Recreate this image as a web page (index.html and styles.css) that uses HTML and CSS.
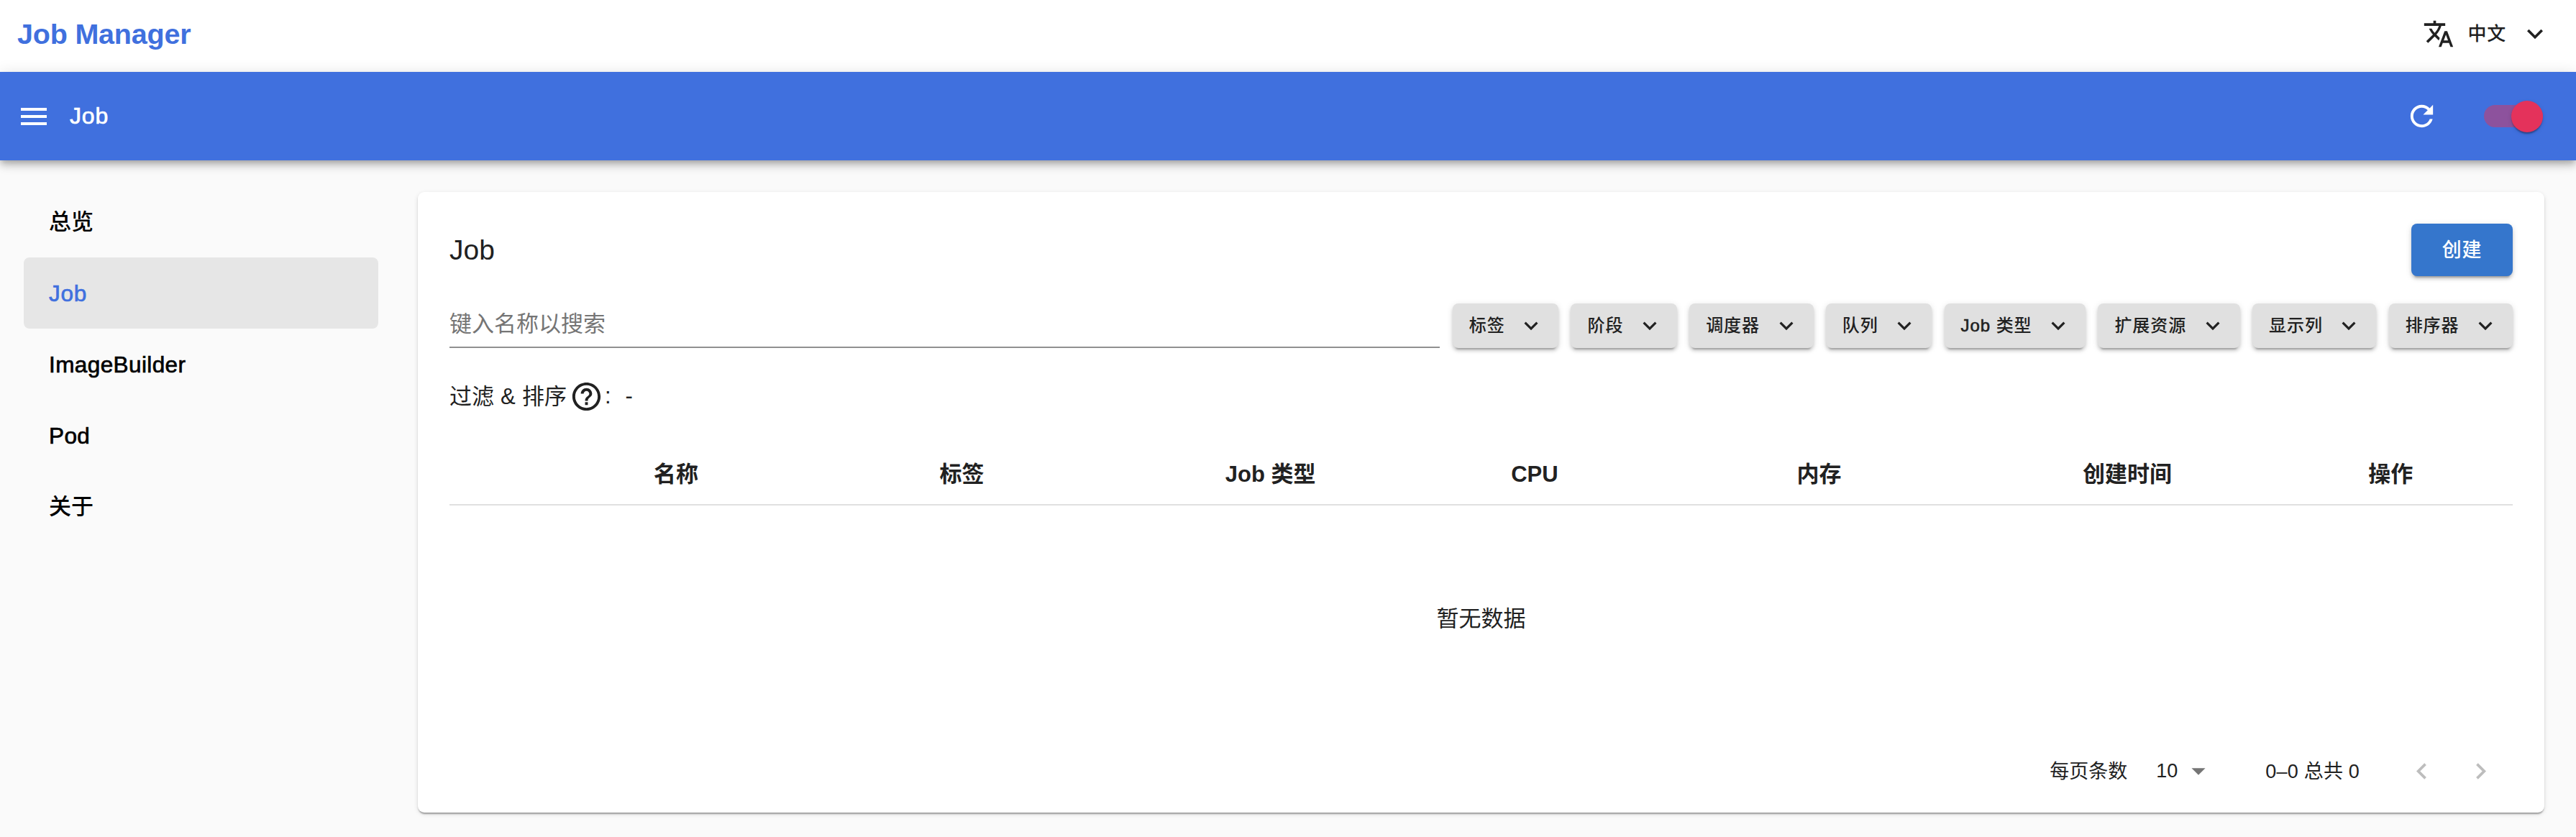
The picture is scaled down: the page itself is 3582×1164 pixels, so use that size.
FILE: index.html
```html
<!DOCTYPE html>
<html lang="zh-CN">
<head>
<meta charset="utf-8">
<title>Job Manager</title>
<link rel="stylesheet" href="styles.css">
</head>
<body>
<svg class="sprite" aria-hidden="true">
  <symbol id="down" viewBox="0 0 24 24"><path d="M7.41 8.59 12 13.17l4.59-4.58L18 10l-6 6-6-6z"/></symbol>
</svg>
<header class="topbar">
  <h1 class="brand">Job Manager</h1>
  <button class="lang">
    <svg class="lang-icon" viewBox="0 0 24 24"><path d="M12.87 15.07l-2.54-2.51.03-.03c1.74-1.94 2.98-4.17 3.71-6.53H17V4h-7V2H8v2H1v1.99h11.17C11.5 7.92 10.44 9.75 9 11.35 8.07 10.32 7.3 9.19 6.69 8h-2c.73 1.63 1.73 3.17 2.98 4.56l-5.09 5.02L4 19l5-5 3.11 3.11.76-2.04zM18.5 10h-2L12 22h2l1.12-3h4.75L21 22h2l-4.5-12zm-2.62 7l1.62-4.33L19.12 17h-3.24z"/></svg>
    <span class="lang-name">中文</span>
    <svg class="lang-icon" viewBox="0 0 24 24"><use href="#down"/></svg>
  </button>
</header>
<div class="appbar">
  <svg class="menu-icon" viewBox="0 0 24 24"><path d="M3 18h18v-2H3v2zm0-5h18v-2H3v2zm0-7v2h18V6H3z"/></svg>
  <span class="crumb">Job</span>
  <svg class="refresh" viewBox="0 0 24 24"><path d="M17.65 6.35C16.2 4.9 14.21 4 12 4c-4.42 0-7.99 3.58-7.99 8s3.57 8 7.99 8c3.73 0 6.84-2.55 7.73-6h-2.08c-.82 2.33-3.04 4-5.65 4-3.31 0-6-2.69-6-6s2.69-6 6-6c1.66 0 3.14.69 4.22 1.78L13 11h7V4l-2.35 2.35z"/></svg>
  <span class="switch"><span class="thumb"></span></span>
</div>
<div class="layout">
  <nav class="sidebar">
    <a class="nav-item">总览</a>
    <a class="nav-item active latin">Job</a>
    <a class="nav-item latin">ImageBuilder</a>
    <a class="nav-item latin">Pod</a>
    <a class="nav-item">关于</a>
  </nav>
  <main class="card">
    <div class="card-head">
      <h2 class="title">Job</h2>
      <button class="create">创建</button>
    </div>
    <div class="toolbar">
      <div class="search">键入名称以搜索</div>
      <button class="filter">标签<svg viewBox="0 0 24 24"><use href="#down"/></svg></button>
      <button class="filter">阶段<svg viewBox="0 0 24 24"><use href="#down"/></svg></button>
      <button class="filter">调度器<svg viewBox="0 0 24 24"><use href="#down"/></svg></button>
      <button class="filter">队列<svg viewBox="0 0 24 24"><use href="#down"/></svg></button>
      <button class="filter"><span><span class="stroke">Job</span> 类型</span><svg viewBox="0 0 24 24"><use href="#down"/></svg></button>
      <button class="filter">扩展资源<svg viewBox="0 0 24 24"><use href="#down"/></svg></button>
      <button class="filter">显示列<svg viewBox="0 0 24 24"><use href="#down"/></svg></button>
      <button class="filter">排序器<svg viewBox="0 0 24 24"><use href="#down"/></svg></button>
    </div>
    <div class="applied">
      <span class="applied-label">过滤 &amp; 排序</span>
      <svg class="help" viewBox="0 0 24 24"><path d="M11 18h2v-2h-2v2zm1-16C6.48 2 2 6.48 2 12s4.48 10 10 10 10-4.48 10-10S17.52 2 12 2zm0 18c-4.41 0-8-3.59-8-8s3.59-8 8-8 8 3.59 8 8-3.59 8-8 8zm0-14c-2.21 0-4 1.79-4 4h2c0-1.1.9-2 2-2s2 .9 2 2c0 2-3 1.75-3 5h2c0-2.25 3-2.5 3-5 0-2.21-1.79-4-4-4z"/></svg>
      <span>:</span>
      <span class="dash">-</span>
    </div>
    <div class="table-head">
      <span></span><span>名称</span><span>标签</span><span>Job 类型</span><span>CPU</span><span>内存</span><span>创建时间</span><span>操作</span>
    </div>
    <div class="empty">暂无数据</div>
    <div class="pager">
      <span class="per-page">每页条数</span>
      <span class="size">10</span>
      <svg class="caret" viewBox="0 0 24 24"><path d="M7 10l5 5 5-5z"/></svg>
      <span class="range">0–0 总共 0</span>
      <svg class="arrow" viewBox="0 0 24 24"><path d="M15.41 16.59 10.83 12l4.58-4.59L14 6l-6 6 6 6z"/></svg>
      <svg class="arrow" viewBox="0 0 24 24"><path d="M8.59 16.59 13.17 12 8.59 7.41 10 6l6 6-6 6z"/></svg>
    </div>
  </main>
</div>
</body>
</html>
```
FILE: styles.css
```css
* { box-sizing: border-box; margin: 0; }
body {
  min-height: 1164px;
  background: #fafafa;
  color: #212121;
  font: 31px/44px "Liberation Sans", "Noto Sans CJK SC", sans-serif;
  overflow: hidden;
}
button { font: inherit; color: inherit; border: 0; padding: 0; background: none; }
svg { fill: currentColor; flex: none; }
.sprite { display: none; }

.topbar {
  display: flex;
  align-items: center;
  justify-content: space-between;
  height: 100px;
  padding: 0 35px 6px 24px;
  background: #fff;
}
.brand { font-size: 39.5px; font-weight: 700; letter-spacing: -.2px; color: #4070de; }
.lang { display: flex; align-items: center; font-size: 26px; font-weight: 500; letter-spacing: .7px; }
.lang-icon { width: 44px; height: 44px; }
.lang-name { margin: 0 18px 0 19px; }

.appbar {
  position: relative;
  display: flex;
  align-items: center;
  height: 123px;
  padding: 0 46px 0 23px;
  background: #4070de;
  color: #fff;
  box-shadow: 0 4px 8px -2px rgba(0,0,0,.2), 0 8px 10px rgba(0,0,0,.14), 0 2px 20px rgba(0,0,0,.12);
}
.menu-icon { width: 48px; height: 48px; }
.crumb { margin-left: 26px; padding-bottom: 2px; font-size: 32px; letter-spacing: .8px; -webkit-text-stroke: .7px currentColor; }
.refresh { width: 47px; height: 47px; margin-left: auto; }
.switch {
  display: flex;
  align-items: center;
  justify-content: flex-end;
  width: 82px;
  height: 31px;
  margin-left: 63px;
  border-radius: 16px;
  background: #8d529d;
}
.thumb {
  flex: none;
  width: 44px;
  height: 44px;
  border-radius: 50%;
  background: #e4325b;
  box-shadow: 0 4px 2px -2px rgba(0,0,0,.2), 0 2px 2px rgba(0,0,0,.14), 0 2px 6px rgba(0,0,0,.12);
}

.layout { display: flex; align-items: flex-start; padding: 0 44px 0 33px; }
.sidebar { width: 493px; padding-top: 36px; }
.nav-item {
  display: flex;
  align-items: center;
  height: 99px;
  padding-left: 35px;
  border-radius: 8px;
  color: #000;
  font-weight: 500;
}
.latin { font-size: 31.5px; letter-spacing: .4px; -webkit-text-stroke: .7px currentColor; }
.nav-item.active { background: #e6e6e6; color: #4070de; letter-spacing: .8px; }

.card {
  flex: 1;
  height: 863px;
  margin: 44px 0 0 55px;
  padding: 44px 44px 0;
  border-radius: 9px;
  background: #fff;
  box-shadow: 0 4px 2px -2px rgba(0,0,0,.2), 0 2px 2px rgba(0,0,0,.14), 0 2px 6px rgba(0,0,0,.12);
}
.card-head { display: flex; align-items: center; justify-content: space-between; height: 73px; }
.title { font-size: 39px; font-weight: 400; }
.create {
  width: 141px;
  height: 73px;
  border-radius: 8px;
  background: #3576cc;
  color: #fff;
  font-size: 27px;
  font-weight: 500;
  letter-spacing: .8px;
  box-shadow: 0 6px 2px -4px rgba(0,0,0,.2), 0 4px 4px rgba(0,0,0,.14), 0 2px 10px rgba(0,0,0,.12);
}
.toolbar { display: flex; gap: 17.3px; height: 62px; margin-top: 38px; }
.search { flex: 1; border-bottom: 2px solid #909090; color: #757575; line-height: 58px; }
.filter {
  display: flex;
  align-items: center;
  justify-content: space-between;
  gap: 17.5px;
  padding: 0 19px 0 23px;
  border-radius: 8px;
  background: #e0e0e0;
  font-size: 24px;
  font-weight: 500;
  letter-spacing: .95px;
  white-space: nowrap;
  box-shadow: 0 6px 2px -4px rgba(0,0,0,.2), 0 4px 4px rgba(0,0,0,.14), 0 2px 10px rgba(0,0,0,.12);
}
.filter svg { width: 38px; height: 38px; }
.stroke { -webkit-text-stroke: .6px currentColor; }

.applied { display: flex; align-items: center; height: 50px; margin-top: 42px; }
.applied-label { padding-top: 2px; word-spacing: .5px; }
.help { width: 47px; height: 47px; margin: 0 2px 0 4px; }
.dash { margin-left: 20px; }

.table-head {
  display: grid;
  grid-template-columns: 252px repeat(6, 397.4px) 1fr;
  align-items: center;
  height: 87px;
  margin-top: 40px;
  padding-top: 3px;
  border-bottom: 2px solid #e0e0e0;
  font-weight: 700;
}
.table-head span { padding-left: 32px; }
.empty { display: flex; align-items: center; justify-content: center; height: 316px; }

.pager {
  display: flex;
  align-items: center;
  justify-content: flex-end;
  height: 106px;
  padding-right: 22px;
  font-size: 27px;
}
.per-page, .range { padding-top: 2px; }
.size { margin-left: 40px; }
.caret { width: 46px; height: 46px; margin-left: 6px; color: #757575; }
.range { margin: 0 64px 0 70px; letter-spacing: .2px; }
.arrow { width: 45px; height: 45px; color: #bdbdbd; }
.arrow + .arrow { margin-left: 37px; }
```
